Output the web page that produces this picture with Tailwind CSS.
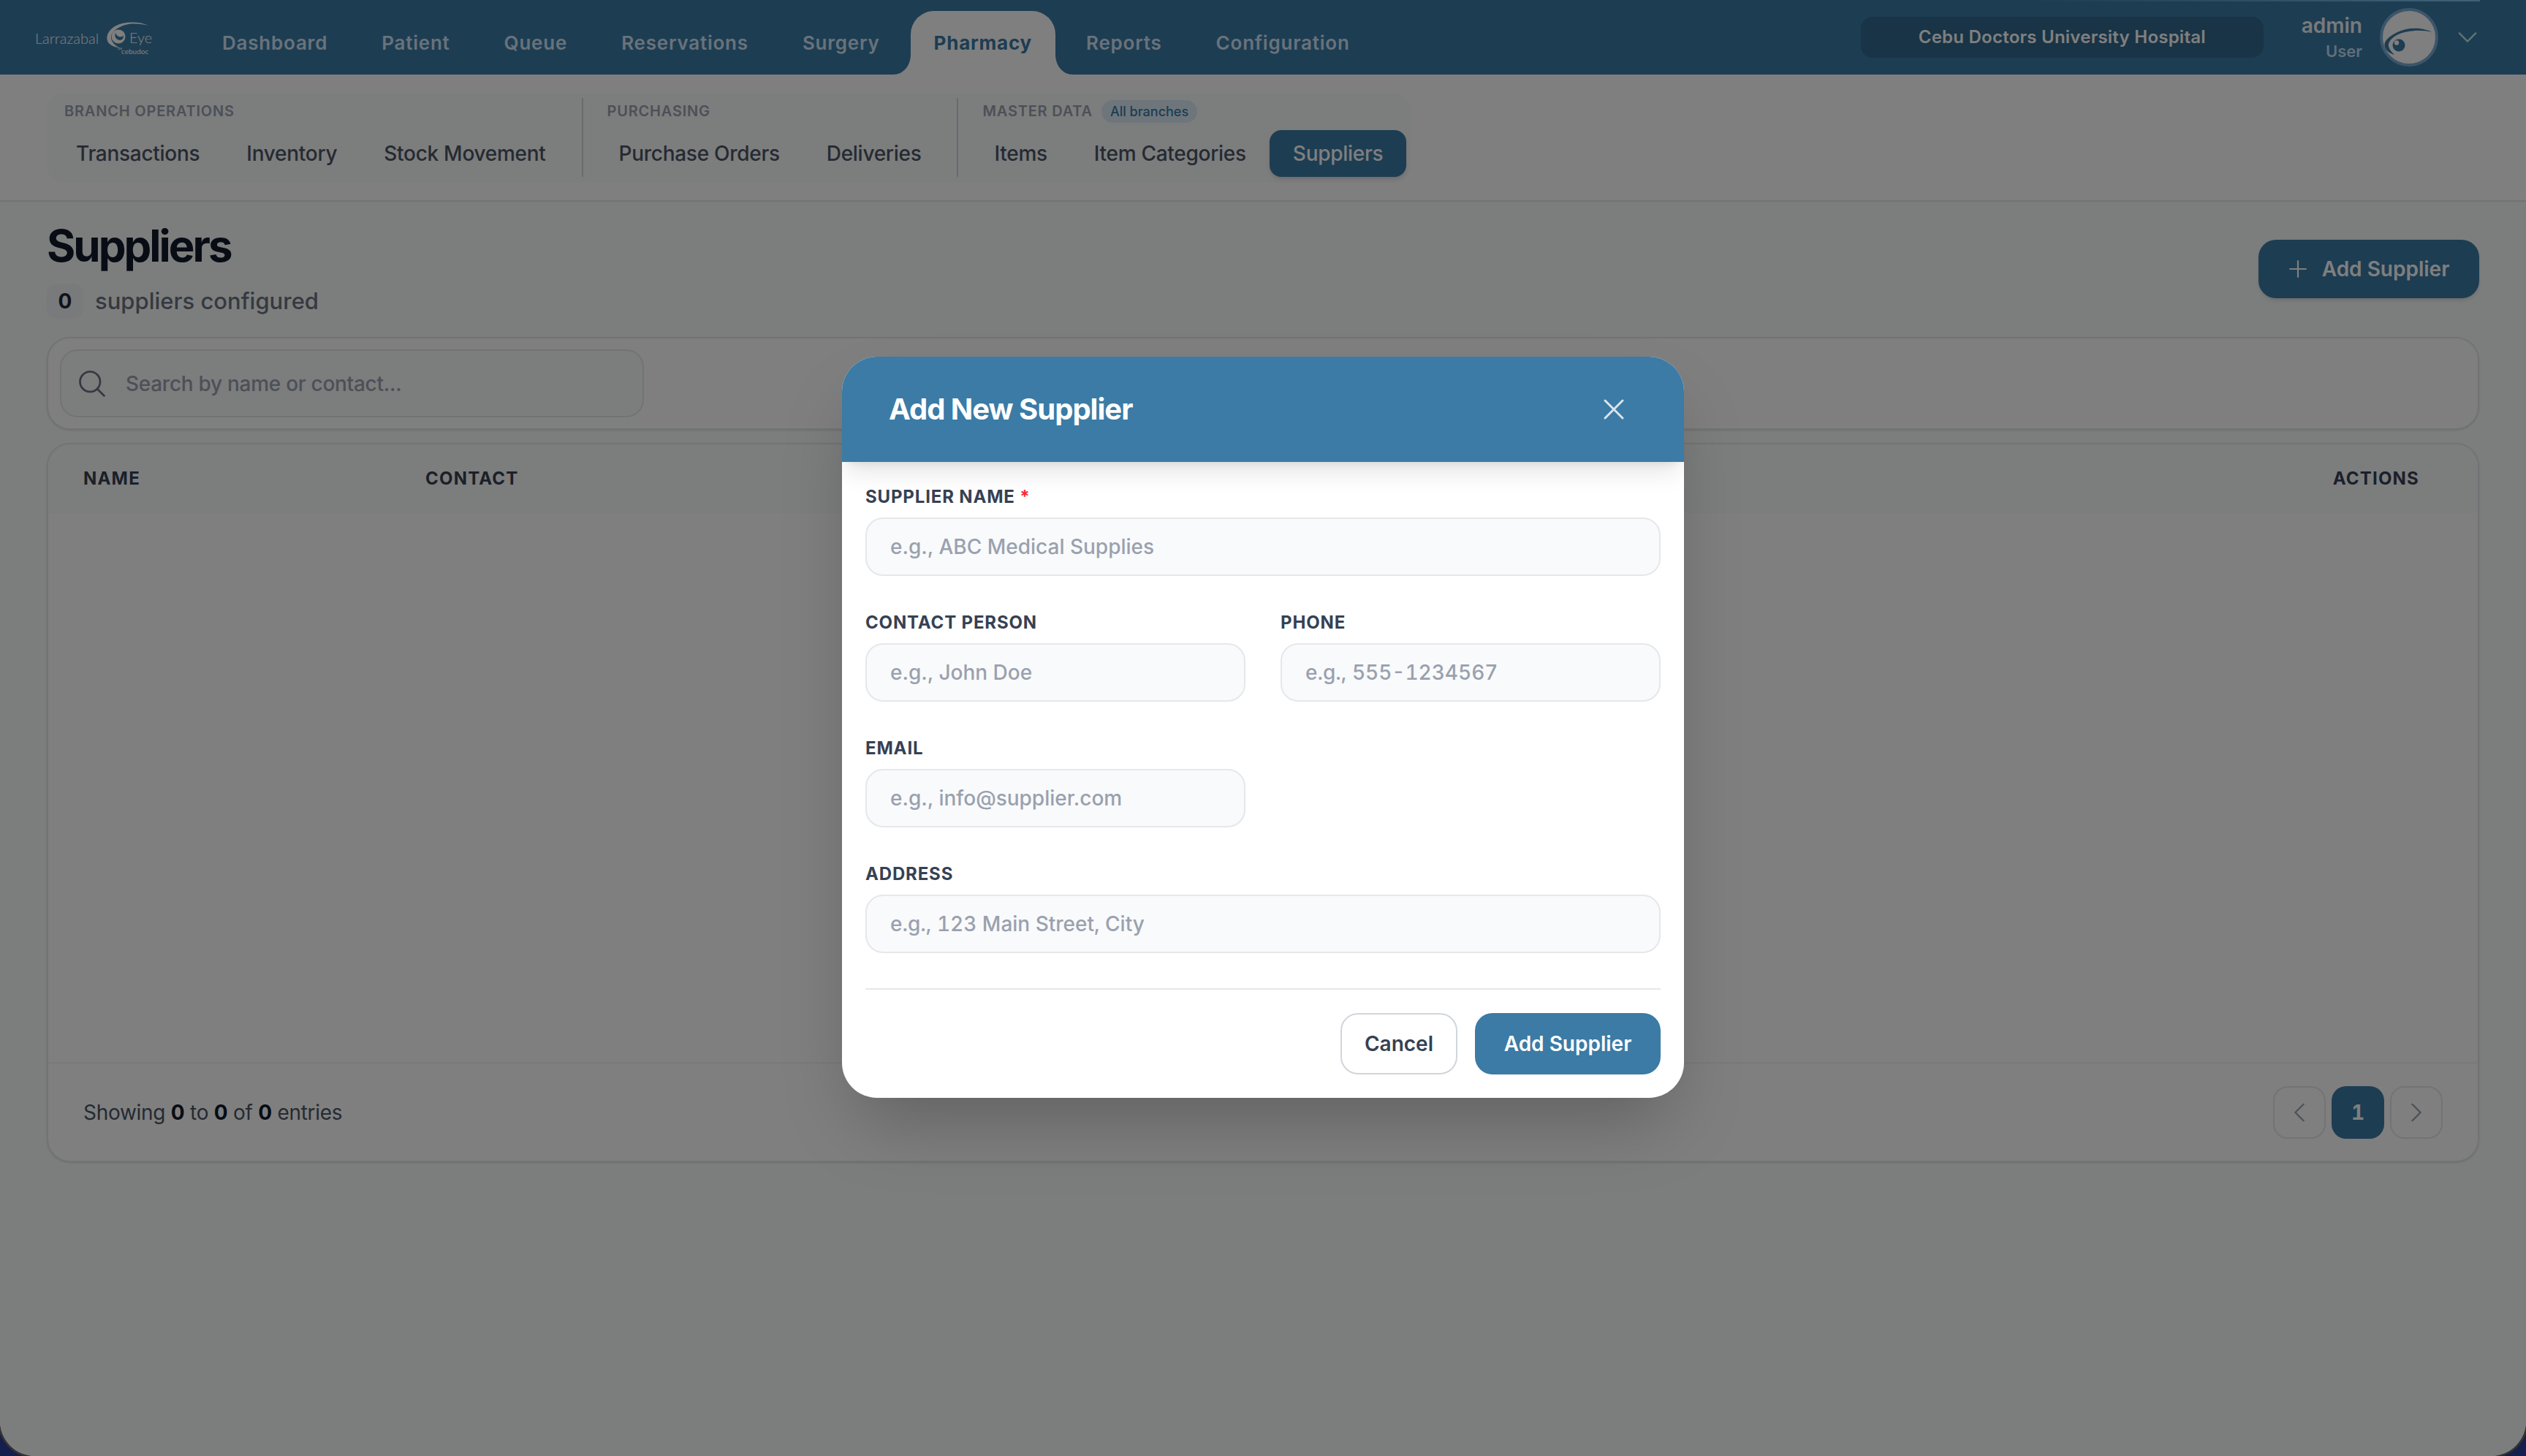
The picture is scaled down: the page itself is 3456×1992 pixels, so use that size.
<!DOCTYPE html>
<html lang="en">
<head>
    <meta charset="UTF-8">
    <title>Suppliers</title>
    <script src="https://cdn.jsdelivr.net/npm/@tailwindcss/browser@4"></script>
</head>
<body class="bg-[#141f4d] font-[family-name:Inter,sans-serif]">
<div class="relative w-[3456px] h-[1992px] overflow-hidden rounded-b-[48px] bg-[#f9fcfb] flex flex-col shadow-[0_0_0_3px_#333]">

    <!-- Top nav -->
    <header class="relative h-[102px] shrink-0 bg-[#3a7ba5] flex items-center pl-[48px] pr-[62px]">
        <div class="absolute top-0 left-[2775px] w-[618px] h-[2px] bg-gradient-to-r from-transparent to-[#7fc4f0]"></div>
        <!-- Logo -->
        <div class="relative w-[160px] h-[102px] flex items-center text-white font-[family-name:Lato,sans-serif] font-light text-[20px] leading-none shrink-0">
            <span class="w-[97px] mt-[2px]">Larrazabal</span>
            <svg class="w-[62px] h-[40px] -ml-[1px] -mt-[6px] shrink-0 overflow-visible" viewBox="0 0 62 40" fill="none">
                <path d="M59 7C46 1 26 1 13 8C3 14 0 24 4 30C7 34 13 37 19 37C13 34 8 29 8 23C8 15 20 7 32 5C42 4 52 5 59 7Z" fill="#fff"/>
                <circle cx="18" cy="22" r="9.5" fill="#fff"/>
                <path d="M14 17C16 22 20 24 25 21C25 27 20 28 17 26C13 24 13 20 14 17Z" fill="#3a7ba5"/>
            </svg>
            <span class="absolute left-[129px] top-[41px] text-[20px]">Eye</span>
            <span class="absolute left-[113px] top-[63px] text-[6px] font-normal">by</span>
            <span class="absolute left-[118px] top-[65px] text-[10px] font-normal">cebudoc</span>
        </div>
        <!-- Main links -->
        <nav class="flex self-end gap-[10px] ml-[64px] text-[26px] font-semibold tracking-[0.03em] text-[#d2e4f6]">
            <a class="h-[87px] px-[32px] flex items-center">Dashboard</a>
            <a class="h-[87px] px-[32px] flex items-center">Patient</a>
            <a class="h-[87px] px-[32px] flex items-center">Queue</a>
            <a class="h-[87px] px-[32px] flex items-center">Reservations</a>
            <a class="h-[87px] px-[32px] flex items-center">Surgery</a>
            <a class="relative h-[87px] px-[32px] flex items-center rounded-t-[32px] bg-white text-[#3a7ba5] font-bold">
                <svg class="absolute bottom-0 -left-[24px] w-[24px] h-[28px]" viewBox="0 0 24 28"><path d="M24 0C24 16 14 28 0 28H24Z" fill="#fff"/></svg>
                Pharmacy
                <svg class="absolute bottom-0 -right-[24px] w-[24px] h-[28px]" viewBox="0 0 24 28"><path d="M0 0C0 16 10 28 24 28H0Z" fill="#fff"/></svg>
            </a>
            <a class="h-[87px] px-[32px] flex items-center">Reports</a>
            <a class="h-[87px] px-[32px] flex items-center">Configuration</a>
        </nav>
        <!-- Right side -->
        <div class="ml-auto flex items-center">
            <div class="w-[551px] h-[56px] rounded-[16px] bg-black/15 flex items-center justify-center text-white text-[24px] font-semibold tracking-[0.01em]">Cebu Doctors University Hospital</div>
            <div class="ml-[52px] flex flex-col items-end pb-[2px]">
                <span class="text-[28px] leading-[36px] font-semibold text-[#f0f4f8]">admin</span>
                <span class="mt-[3px] text-[22px] leading-[28px] font-semibold text-[#bfdcf5]">User</span>
            </div>
            <div class="ml-[24px] w-[80px] h-[80px] rounded-full border-[4px] border-[#78aad2] bg-white overflow-hidden shrink-0">
                <svg class="w-[72px] h-[72px]" viewBox="4 4 72 72">
                    <path d="M72 33C60 27 40 25 24 33C12 39 4 46 7 54C9 59 14 62 20 64C15 59 11 54 12 49C14 42 22 36 34 33C46 30 60 30 72 33Z" fill="#3a7ba5"/>
                    <circle cx="26" cy="51" r="8.5" fill="#3a7ba5"/>
                    <circle cx="23" cy="47.5" r="3.2" fill="#fff"/>
                </svg>
            </div>
            <svg class="ml-[22px] w-[36px] h-[36px] text-[#bcecdf]" viewBox="0 0 24 24" fill="none" stroke="currentColor" stroke-width="1.5"><path stroke-linecap="round" stroke-linejoin="round" d="M19.5 8.25l-7.5 7.5-7.5-7.5"/></svg>
        </div>
    </header>

    <!-- Sub nav -->
    <div class="h-[174px] shrink-0 bg-white border-b-[2px] border-gray-200 pl-[64px] pt-[25px]">
        <div class="inline-flex h-[123px] rounded-[24px] bg-gray-50 pt-[7px] pb-[8px] pl-[8px] pr-[6px]">
            <section>
                <div class="h-[36px] px-[16px] flex items-center text-[20px] font-semibold tracking-[0.04em] text-gray-400">BRANCH OPERATIONS</div>
                <div class="flex mt-[8px] text-[28px] font-medium tracking-[-0.01em] text-gray-600">
                    <a class="h-[64px] px-[32px] flex items-center">Transactions</a>
                    <a class="h-[64px] px-[32px] flex items-center">Inventory</a>
                    <a class="h-[64px] px-[32px] flex items-center">Stock Movement</a>
                </div>
            </section>
            <div class="w-[2px] h-[108px] bg-gray-300 mx-[17px]"></div>
            <section>
                <div class="h-[36px] px-[16px] flex items-center text-[20px] font-semibold tracking-[0.04em] text-gray-400">PURCHASING</div>
                <div class="flex mt-[8px] text-[28px] font-medium tracking-[-0.01em] text-gray-600">
                    <a class="h-[64px] px-[32px] flex items-center">Purchase Orders</a>
                    <a class="h-[64px] px-[32px] flex items-center">Deliveries</a>
                </div>
            </section>
            <div class="w-[2px] h-[108px] bg-gray-300 mx-[17px]"></div>
            <section>
                <div class="h-[36px] px-[16px] flex items-center text-[20px] font-semibold tracking-[0.04em] text-gray-400">
                    MASTER DATA
                    <span class="ml-[12px] h-[31px] px-[12px] rounded-full bg-[#dcecf9] text-[#3a7ba5] text-[18px] font-medium tracking-normal flex items-center">All branches</span>
                </div>
                <div class="flex mt-[8px] text-[28px] font-medium tracking-[-0.01em] text-gray-600">
                    <a class="h-[64px] px-[32px] flex items-center">Items</a>
                    <a class="h-[64px] px-[32px] flex items-center">Item Categories</a>
                    <a class="h-[64px] px-[32px] flex items-center rounded-[16px] bg-[#3a7ba5] text-white shadow-md">Suppliers</a>
                </div>
            </section>
        </div>
    </div>

    <!-- Main -->
    <main class="px-[64px] pt-[24px]">
        <div class="flex items-center justify-between h-[136px]">
            <div>
                <h1 class="text-[60px] leading-[72px] font-bold tracking-[-0.05em] text-gray-900">Suppliers</h1>
                <div class="mt-[16px] flex items-center">
                    <span class="w-[50px] h-[48px] rounded-[14px] bg-gray-100 flex items-center justify-center text-[28px] font-bold text-gray-800">0</span>
                    <span class="ml-[16px] text-[31px] font-medium text-gray-500">suppliers configured</span>
                </div>
            </div>
            <button class="h-[80px] w-[302px] rounded-[24px] bg-[#3a7ba5] text-white text-[28px] font-semibold flex items-center justify-center gap-[20px] shadow-md">
                <svg class="w-[26px] h-[26px]" viewBox="0 0 24 24" fill="none" stroke="currentColor" stroke-width="2"><path stroke-linecap="round" d="M12 2v20M2 12h20"/></svg>
                Add Supplier
            </button>
        </div>

        <div class="mt-[25px] h-[127px] rounded-[32px] border-[2px] border-gray-200 bg-white shadow-sm px-[16px] py-[15px]">
            <div class="w-[799px] h-[93px] rounded-[24px] border-[2px] border-gray-200 bg-gray-50 flex items-center pl-[20px] gap-[24px]">
                <svg class="w-[44px] h-[44px] text-gray-500 shrink-0" viewBox="0 0 24 24" fill="none" stroke="currentColor" stroke-width="1.5"><path stroke-linecap="round" stroke-linejoin="round" d="M21 21l-5.197-5.197m0 0A7.5 7.5 0 105.196 5.196a7.5 7.5 0 0010.607 10.607z"/></svg>
                <input class="flex-1 bg-transparent outline-none text-[28px] font-medium tracking-[-0.01em] placeholder:text-gray-400" placeholder="Search by name or contact...">
            </div>
        </div>

        <div class="mt-[18px] h-[984px] rounded-[32px] border-[2px] border-gray-200 bg-white shadow-sm flex flex-col overflow-hidden">
            <div class="h-[94px] shrink-0 bg-gray-50 grid grid-cols-[468px_1fr_auto] items-center px-[48px] pr-[80px] text-[24px] font-bold tracking-[0.05em] text-gray-700">
                <span>NAME</span>
                <span>CONTACT</span>
                <span>ACTIONS</span>
            </div>
            <div class="flex-1"></div>
            <div class="h-[135px] shrink-0 border-t-[2px] border-gray-100 flex items-center justify-between px-[48px] text-[28px] tracking-[-0.01em] text-gray-600">
                <p>Showing <b class="font-bold text-gray-900">0</b> to <b class="font-bold text-gray-900">0</b> of <b class="font-bold text-gray-900">0</b> entries</p>
                <div class="flex gap-[8px]">
                    <button class="w-[72px] h-[72px] rounded-[20px] border-[2px] border-gray-200 flex items-center justify-center text-gray-400">
                        <svg class="w-[36px] h-[36px]" viewBox="0 0 24 24" fill="none" stroke="currentColor" stroke-width="1.5"><path stroke-linecap="round" stroke-linejoin="round" d="M15.75 19.5L8.25 12l7.5-7.5"/></svg>
                    </button>
                    <button class="w-[72px] h-[72px] rounded-[20px] bg-[#3a7ba5] text-white text-[28px] font-bold tabular-nums">1</button>
                    <button class="w-[72px] h-[72px] rounded-[20px] border-[2px] border-gray-200 flex items-center justify-center text-gray-400">
                        <svg class="w-[36px] h-[36px]" viewBox="0 0 24 24" fill="none" stroke="currentColor" stroke-width="1.5"><path stroke-linecap="round" stroke-linejoin="round" d="M8.25 4.5l7.5 7.5-7.5 7.5"/></svg>
                    </button>
                </div>
            </div>
        </div>
    </main>

    <!-- Modal -->
    <div class="absolute inset-0 bg-black/50 flex items-center justify-center">
        <div class="w-[1152px] h-[1014px] mb-[2px] rounded-[48px] bg-white overflow-hidden shadow-[0_50px_100px_-24px_rgba(0,0,0,0.25)]">
            <div class="relative h-[144px] bg-[#3b7ba5] flex items-center justify-between pl-[64px] pr-[64px] shadow-[0_20px_30px_-6px_rgba(0,0,0,0.1),0_8px_12px_-8px_rgba(0,0,0,0.1)]">
                <h2 class="text-[40px] font-bold tracking-[-0.025em] text-white">Add New Supplier</h2>
                <button class="p-[8px] text-white/80">
                    <svg class="w-[48px] h-[48px]" viewBox="0 0 24 24" fill="none" stroke="currentColor" stroke-width="1.5"><path stroke-linecap="round" stroke-linejoin="round" d="M6 18L18 6M6 6l12 12"/></svg>
                </button>
            </div>
            <form class="px-[32px] pt-[32px] pb-[32px]">
                <label class="block text-[24px] leading-[32px] font-bold tracking-[0.035em] text-gray-700 mb-[12px]">SUPPLIER NAME <span class="text-red-500">*</span></label>
                <input class="block w-full h-[80px] rounded-[24px] border-[2px] border-gray-200 bg-gray-50 px-[32px] text-[28px] font-medium placeholder:text-gray-400" placeholder="e.g., ABC Medical Supplies">

                <div class="grid grid-cols-2 gap-x-[48px] mt-[48px]">
                    <div>
                        <label class="block text-[24px] leading-[32px] font-bold tracking-[0.035em] text-gray-700 mb-[12px]">CONTACT PERSON</label>
                        <input class="block w-full h-[80px] rounded-[24px] border-[2px] border-gray-200 bg-gray-50 px-[32px] text-[28px] font-medium placeholder:text-gray-400" placeholder="e.g., John Doe">
                    </div>
                    <div>
                        <label class="block text-[24px] leading-[32px] font-bold tracking-[0.035em] text-gray-700 mb-[12px]">PHONE</label>
                        <input class="block w-full h-[80px] rounded-[24px] border-[2px] border-gray-200 bg-gray-50 px-[32px] text-[28px] font-medium tabular-nums placeholder:text-gray-400" placeholder="e.g., 555-1234567">
                    </div>
                </div>

                <div class="grid grid-cols-2 gap-x-[48px] mt-[48px]">
                    <div>
                        <label class="block text-[24px] leading-[32px] font-bold tracking-[0.035em] text-gray-700 mb-[12px]">EMAIL</label>
                        <input class="block w-full h-[80px] rounded-[24px] border-[2px] border-gray-200 bg-gray-50 px-[32px] text-[28px] font-medium placeholder:text-gray-400" placeholder="e.g., info@supplier.com">
                    </div>
                </div>

                <label class="block mt-[48px] text-[24px] leading-[32px] font-bold tracking-[0.035em] text-gray-700 mb-[12px]">ADDRESS</label>
                <input class="block w-full h-[80px] rounded-[24px] border-[2px] border-gray-200 bg-gray-50 px-[32px] text-[28px] font-medium tabular-nums placeholder:text-gray-400" placeholder="e.g., 123 Main Street, City">

                <div class="mt-[48px] pt-[32px] border-t-[2px] border-gray-200 flex justify-end gap-[24px]">
                    <button type="button" class="h-[84px] w-[160px] rounded-[24px] border-[2px] border-gray-300 bg-white text-[28px] font-semibold text-gray-700">Cancel</button>
                    <button type="button" class="h-[84px] w-[254px] rounded-[24px] bg-[#3b7ba5] text-[28px] font-semibold text-white">Add Supplier</button>
                </div>
            </form>
        </div>
    </div>
</div>
</body>
</html>
